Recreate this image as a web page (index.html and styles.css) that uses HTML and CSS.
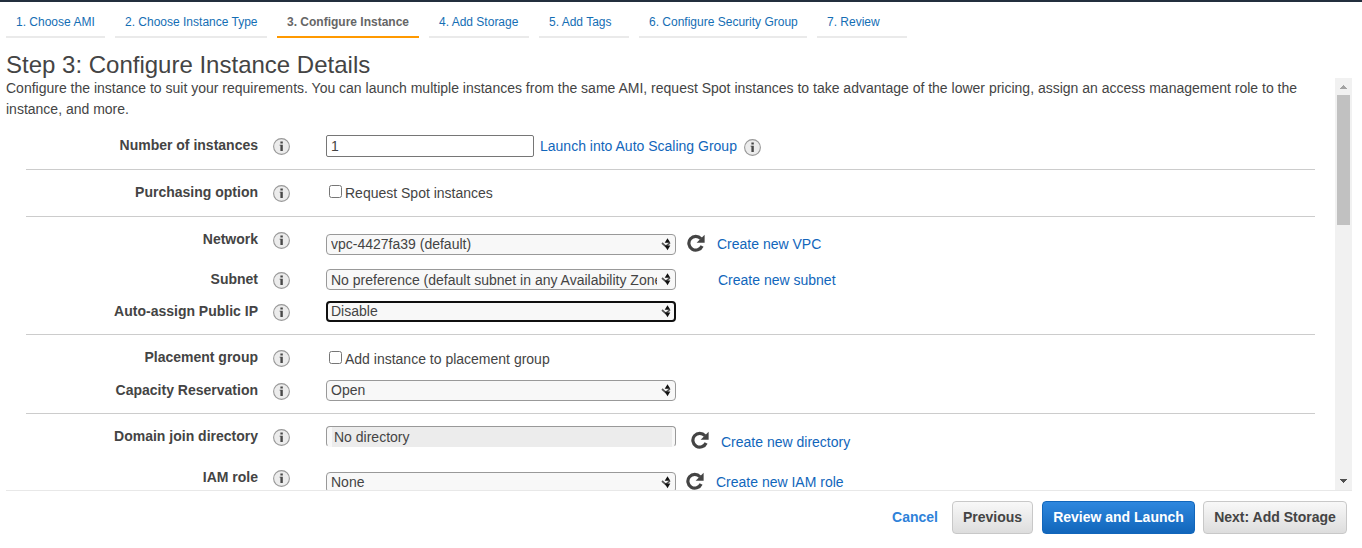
FILE: index.html
```
<!DOCTYPE html>
<html lang="en">
<head>
<meta charset="utf-8">
<title>Configure Instance Details</title>
<link rel="stylesheet" href="styles.css">
</head>
<body>
<svg class="defs" aria-hidden="true">
  <symbol id="info" viewBox="0 0 17 17"><circle cx="8.5" cy="8.5" r="7.9" fill="#ececec" stroke="#999" stroke-width="1.1"/><path d="M7.400 3.600h2.400v2H7.400zM6.600 6.700h3.200V13H7.400V7.600h-.8z" fill="#484848"/></symbol>
  <symbol id="refresh" viewBox="0 0 18 18"><path d="M14 4.700A6.900 6.900 0 1 0 15.100 12" fill="none" stroke="#444" stroke-width="3.200"/><path d="M17.600 .8v8H9.600z" fill="#444"/></symbol>
  <symbol id="arrows" viewBox="0 0 11 13"><path d="M1 5l3.700 3.400L9 4.800" fill="none" stroke="#555" stroke-width="1.700"/><path d="M6.500 .2l2.800 4.600H3.700zM3.700 7.500h5.600L6.500 12.300z" fill="#111"/></symbol>
</svg>
<nav class="steps">
  <a class="step s1">1. Choose AMI</a><a class="step s2">2. Choose Instance Type</a><a class="step s3 active">3. Configure Instance</a><a class="step s4">4. Add Storage</a><a class="step s5">5. Add Tags</a><a class="step s6">6. Configure Security Group</a><a class="step s7">7. Review</a>
</nav>
<h1 class="title">Step 3: Configure Instance Details</h1>
<main class="panel">
  <div class="content">
    <p class="intro">Configure the instance to suit your requirements. You can launch multiple instances from the same AMI, request Spot instances to take advantage of the lower pricing, assign an access management role to the<br>instance, and more.</p>
    <section class="group first">
      <div class="row h34"><span class="label">Number of instances</span><svg class="info"><use href="#info"/></svg>
        <div class="control"><input class="number" type="text" value="1"><a class="link launch">Launch into Auto Scaling Group</a><svg class="info launch-info"><use href="#info"/></svg></div></div>
    </section>
    <section class="group">
      <div class="row h34"><span class="label">Purchasing option</span><svg class="info"><use href="#info"/></svg>
        <label class="control check"><input class="box" type="checkbox"><span class="check-text">Request Spot instances</span></label></div>
    </section>
    <section class="group">
      <div class="row h40"><span class="label">Network</span><svg class="info"><use href="#info"/></svg>
        <div class="control low"><div class="select"><span class="value">vpc-4427fa39 (default)</span><svg class="arrows"><use href="#arrows"/></svg></div><svg class="refresh"><use href="#refresh"/></svg><a class="link new-vpc">Create new VPC</a></div></div>
      <div class="row h32"><span class="label">Subnet</span><svg class="info"><use href="#info"/></svg>
        <div class="control"><div class="select subnet"><span class="value">No preference (default subnet in any Availability Zone</span><svg class="arrows"><use href="#arrows"/></svg></div><a class="link new-subnet">Create new subnet</a></div></div>
      <div class="row h33"><span class="label">Auto-assign Public IP</span><svg class="info"><use href="#info"/></svg>
        <div class="control"><div class="select focused"><span class="value">Disable</span><svg class="arrows"><use href="#arrows"/></svg></div></div></div>
    </section>
    <section class="group">
      <div class="row h33"><span class="label">Placement group</span><svg class="info"><use href="#info"/></svg>
        <label class="control check"><input class="box lower" type="checkbox"><span class="check-text lower">Add instance to placement group</span></label></div>
      <div class="row h33"><span class="label">Capacity Reservation</span><svg class="info"><use href="#info"/></svg>
        <div class="control"><div class="select"><span class="value">Open</span><svg class="arrows"><use href="#arrows"/></svg></div></div></div>
    </section>
    <section class="group">
      <div class="row h41"><span class="label">Domain join directory</span><svg class="info"><use href="#info"/></svg>
        <div class="control"><div class="select directory"><span class="directory-fill">No directory</span></div><svg class="refresh dir-refresh"><use href="#refresh"/></svg><a class="link new-dir">Create new directory</a></div></div>
      <div class="row h41"><span class="label">IAM role</span><svg class="info"><use href="#info"/></svg>
        <div class="control low"><div class="select"><span class="value">None</span><svg class="arrows"><use href="#arrows"/></svg></div><svg class="refresh iam-refresh"><use href="#refresh"/></svg><a class="link new-iam">Create new IAM role</a></div></div>
    </section>
  </div>
  <div class="scrollbar">
    <svg class="sb-btn" viewBox="0 0 17 17" shape-rendering="crispEdges"><path d="M5 10h7v1H5zM6 9h5v1H6zM7 8h3v1H7zM8 7h1v1H8z" fill="#a3a3a3"/></svg>
    <div class="thumb"></div>
    <svg class="sb-btn bottom" viewBox="0 0 17 17" shape-rendering="crispEdges"><path d="M5 6h7v1H5zM6 7h5v1H6zM7 8h3v1H7zM8 9h1v1H8z" fill="#505050"/></svg>
  </div>
</main>
<footer class="actions">
  <a class="cancel">Cancel</a>
  <button class="btn prev">Previous</button>
  <button class="btn primary">Review and Launch</button>
  <button class="btn next">Next: Add Storage</button>
</footer>
</body>
</html>
```
FILE: styles.css
```
* { box-sizing: border-box; }
body { margin: 0; height: 548px; overflow: hidden; background: #fff; border-top: 2px solid #232f3e; color: #444; font: 14px/20px "Liberation Sans", Arial, sans-serif; }
.defs { display: none; }
.steps { display: flex; gap: 10px; padding-left: 6px; height: 36px; }
.step { height: 36px; padding: 0 0 0 10px; border-bottom: 2px solid #eaeaea; color: #146eb4; font-size: 12px; line-height: 40px; white-space: nowrap; }
.step.active { border-color: #f90; color: #666; font-weight: bold; }
.s1 { width: 99px; } .s2 { width: 152px; } .s3 { width: 142px; } .s4 { width: 100px; } .s5 { width: 90px; } .s6 { width: 168px; } .s7 { width: 90px; }
.title { margin: 0; padding: 13px 0 0 6px; height: 40px; font-size: 24px; line-height: 28px; font-weight: normal; }
.panel { display: flex; margin: 0 10px 0 6px; height: 413px; border-bottom: 1px solid #e8e8e8; }
.content { flex: 1; height: 412px; overflow: hidden; }
.intro { margin: 0; height: 42px; line-height: 21px; white-space: nowrap; }
.group { margin: 0 20px; padding-top: 12px; border-bottom: 1px solid #ccc; }
.group.first { padding-top: 15px; }
.row { display: grid; grid-template-columns: 232px 15px 17px 36px 1fr; align-items: start; }
.h32 { height: 32px; } .h33 { height: 33px; } .h34 { height: 34px; } .h40 { height: 40px; } .h41 { height: 41px; }
.label { text-align: right; font-weight: bold; line-height: 20px; white-space: nowrap; }
.info { display: block; width: 17px; height: 17px; margin-top: 3px; grid-column: 3; flex: none; }
.control { grid-column: 5; display: flex; align-items: flex-start; }
.control.low { padding-top: 5px; }
.number { width: 208px; height: 22px; margin: 0; padding: 0 4px; border: 1px solid #767676; border-radius: 2px; font: inherit; color: #444; }
.link { color: #1166bb; line-height: 21px; white-space: nowrap; }
.launch { margin-left: 6px; width: 197px; line-height: 22px; }
.launch-info { margin: 4px 0 0 7px; }
.box { width: 13px; height: 13px; margin: 3px 3px 0; }
.check-text { line-height: 20px; padding-top: 1px; }
.box.lower { margin-top: 4px; }
.check-text.lower { padding-top: 2px; }
.select { display: flex; width: 350px; height: 21px; padding: 0 3px 0 4px; border: 1px solid #999; border-radius: 4px; background: #f8f8f8; line-height: 19px; }
.value { flex: 1; overflow: hidden; white-space: nowrap; }
.subnet { line-height: 21px; }
.arrows { width: 11px; height: 13px; margin: 3px 0 0 4px; flex: none; }
.select.focused { border: 2px solid #101010; padding: 0 2px 0 3px; line-height: 17px; }
.focused .arrows { margin-top: 2px; }
.refresh { width: 18px; height: 18px; margin-left: 11px; flex: none; }
.new-vpc { margin-left: 12px; }
.new-subnet { margin-left: 42px; line-height: 23px; }
.directory { padding: 0 3px 0 5px; border-bottom-color: transparent; background: #f8f8f8; }
.directory-fill { flex: 1; height: 20px; padding-left: 2px; background: #ececec; line-height: 20px; }
.dir-refresh { margin: 5px 0 0 15px; }
.new-dir { margin: 6px 0 0 12px; }
.iam-refresh { margin-left: 10px; }
.new-iam { margin-left: 12px; }
.scrollbar { display: flex; flex-direction: column; width: 17px; height: 412px; background: #f1f1f1; }
.sb-btn { width: 17px; height: 17px; flex: none; }
.thumb { width: 13px; height: 130px; margin-left: 2px; background: #c1c1c1; }
.bottom { margin-top: auto; }
.actions { display: flex; justify-content: flex-end; padding: 10px 15px 0 0; font-weight: bold; }
.cancel { margin-right: 14px; color: #2e82d9; line-height: 33px; }
.btn { height: 33px; padding: 0; border: 1px solid #c8c8c8; border-radius: 4px; background: linear-gradient(#f8f8f8, #ddd); color: #444; font: bold 14px/31px "Liberation Sans", Arial, sans-serif; white-space: nowrap; }
.prev { width: 81px; margin-right: 9px; }
.primary { width: 153px; margin-right: 8px; border-color: #1166bb; background: linear-gradient(#2e87de, #1166bb); color: #fff; }
.next { width: 144px; }
```
